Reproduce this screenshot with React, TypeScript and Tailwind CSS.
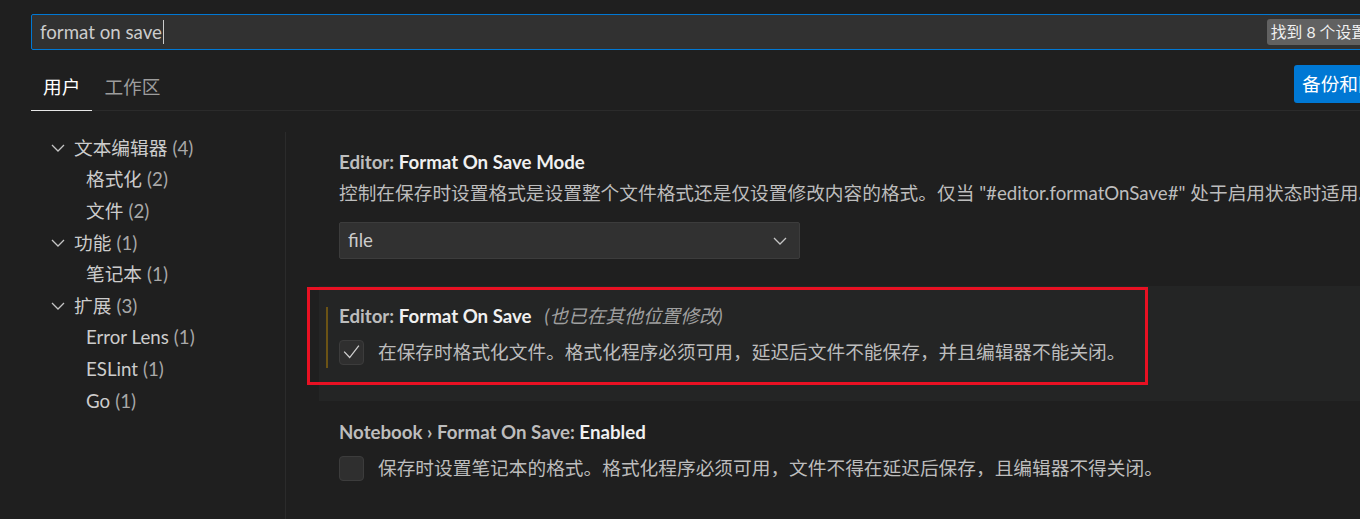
import React from "react";

const Chevron = ({ className = "" }: { className?: string }) => (
  <svg width="14" height="8" viewBox="0 0 14 8" className={className} fill="none">
    <path d="M1 1l6 6 6-6" stroke="#c5c5c5" strokeWidth="1.3" />
  </svg>
);

type TreeItem = { label: string; count: number; level: 0 | 1 };
const tree: TreeItem[] = [
  { label: "文本编辑器", count: 4, level: 0 },
  { label: "格式化", count: 2, level: 1 },
  { label: "文件", count: 2, level: 1 },
  { label: "功能", count: 1, level: 0 },
  { label: "笔记本", count: 1, level: 1 },
  { label: "扩展", count: 3, level: 0 },
  { label: "Error Lens", count: 1, level: 1 },
  { label: "ESLint", count: 1, level: 1 },
  { label: "Go", count: 1, level: 1 },
];

const Checkbox = ({ checked }: { checked: boolean }) => (
  <div className="flex h-[25px] w-[25px] shrink-0 items-center justify-center rounded-[4px] border border-[#3c3c3c] bg-[#2f2f2f]">
    {checked && (
      <svg width="25" height="25" viewBox="0 0 25 25" fill="none">
        <path d="M4.5 11.5l6 6.5L20.5 5" stroke="#d0d0d0" strokeWidth="1.4" />
      </svg>
    )}
  </div>
);

export default function App() {
  return (
    <div
      className="relative h-[519px] w-[1360px] overflow-hidden bg-[#1f1f1f] text-[18.7px] text-[#cccccc]"
      style={{ fontFamily: "Lato, 'Noto Sans CJK SC', sans-serif" }}
    >
      {/* search */}
      <div className="pl-[31px] pt-[14px]">
        <div className="flex h-[36px] w-[1345px] items-center rounded-[2px] border border-[#0078d4] bg-[#313131] pl-[8px] pr-[4px]">
          <span className="leading-[26px] text-[#cccccc]">format on save</span>
          <span className="ml-[1px] h-[24px] w-px bg-[#cccccc]" />
          <div className="flex-1" />
          <span className="flex h-[26px] shrink-0 items-center rounded-[3px] bg-[#616161] px-[4px] text-[15.8px] text-[#f0f0f0]">
            找到 8 个设置
          </span>
        </div>
      </div>

      {/* tabs */}
      <div className="pl-[31px]">
        <div className="flex h-[61px] items-end border-b border-[#2b2b2b]">
          <div className="-mb-px flex h-[46px] items-center border-b border-[#e7e7e7] px-[12px] text-[#ffffff]">
            用户
          </div>
          <div className="-mb-px flex h-[46px] items-center border-b border-transparent px-[12px] text-[#9d9d9d]">
            工作区
          </div>
          <div className="flex-1" />
          <div className="mb-[7px] flex h-[38px] w-[140px] shrink-0 items-center self-end rounded-[3px] bg-[#0078d4] pl-[8px] text-[#ffffff] [margin-right:-74px]">
            备份和同步
          </div>
        </div>
      </div>

      {/* main */}
      <div className="mt-[21px] flex">
        <div className="h-[400px] w-[286px] shrink-0 border-r border-[#2b2b2b]">
          {tree.map((t) => (
            <div
              key={t.label}
              className={`flex h-[31.6px] items-center ${t.level === 0 ? "pl-[51px]" : "pl-[86px]"}`}
            >
              {t.level === 0 && <Chevron className="mr-[9px] mt-[1px]" />}
              <span className="text-[#cccccc]">{t.label}</span>
              <span className="ml-[5px] text-[#a8a8a8]">({t.count})</span>
            </div>
          ))}
        </div>

        <div className="ml-[33px] flex-1">
          {/* block 1 */}
          <div className="pb-[27px] pl-[20px] pt-[17px]">
            <div className="leading-[26px]">
              <span className="font-bold text-[#bdbdbd]">Editor: </span>
              <span className="font-bold text-[#f0f0f0]">Format On Save Mode</span>
            </div>
            <div className="mt-[5px] whitespace-nowrap leading-[26px] text-[#bdbdbd]">
              控制在保存时设置格式是设置整个文件格式还是仅设置修改内容的格式。仅当 "#editor.formatOnSave#" 处于启用状态时适用。
            </div>
            <div className="mt-[16px] flex h-[37px] w-[461px] items-center justify-between rounded-[2px] border border-[#3c3c3c] bg-[#313131] pl-[8px] pr-[12px]">
              <span className="text-[#cccccc]">file</span>
              <Chevron />
            </div>
          </div>

          {/* block 2 (modified) */}
          <div className="relative h-[115px] bg-[#242525] pl-[20px] pt-[17px]">
            <div className="absolute left-[7px] top-[21px] h-[61px] w-[2px] bg-[#6b5315]" />
            <div className="leading-[26px]">
              <span className="font-bold text-[#bdbdbd]">Editor: </span>
              <span className="font-bold text-[#f0f0f0]">Format On Save</span>
              <span className="ml-[13px] italic text-[#a0a0a0]">(也已在其他位置修改)</span>
            </div>
            <div className="mt-[10px] flex items-center">
              <Checkbox checked />
              <span className="ml-[14px] whitespace-nowrap leading-[26px] text-[#bdbdbd]">
                在保存时格式化文件。格式化程序必须可用，延迟后文件不能保存，并且编辑器不能关闭。
              </span>
            </div>
          </div>

          {/* block 3 */}
          <div className="pl-[20px] pt-[18px]">
            <div className="leading-[26px]">
              <span className="font-bold text-[#bdbdbd]">Notebook › Format On Save: </span>
              <span className="font-bold text-[#f0f0f0]">Enabled</span>
            </div>
            <div className="mt-[10px] flex items-center">
              <Checkbox checked={false} />
              <span className="ml-[14px] whitespace-nowrap leading-[26px] text-[#bdbdbd]">
                保存时设置笔记本的格式。格式化程序必须可用，文件不得在延迟后保存，且编辑器不得关闭。
              </span>
            </div>
          </div>
        </div>
      </div>

      {/* red annotation box */}
      <div className="pointer-events-none absolute left-[307px] top-[287px] h-[98px] w-[841px] border-[3px] border-[#e81123]" />
    </div>
  );
}
